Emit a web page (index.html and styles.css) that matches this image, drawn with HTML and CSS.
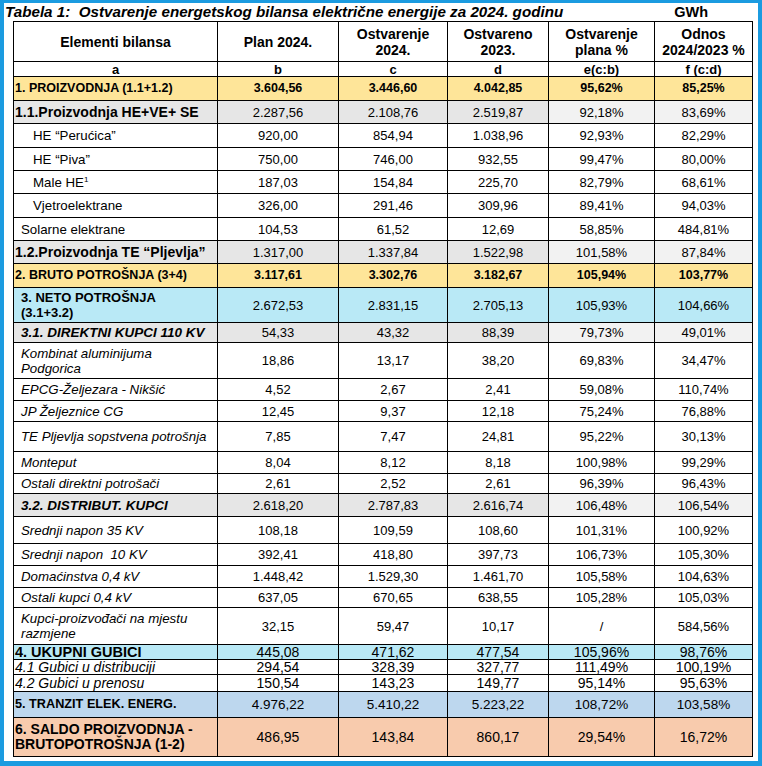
FILE: index.html
```html
<!DOCTYPE html>
<html>
<head>
<meta charset="utf-8">
<link rel="stylesheet" href="styles.css">
</head>
<body>
<div class="frame">
  <div class="title-row">
    <span class="title">Tabela 1:&nbsp; Ostvarenje energetskog bilansa električne energije za 2024. godinu</span>
    <span class="unit">GWh</span>
  </div>
  <table class="bilans">
    <colgroup>
      <col class="c-a"><col class="c-b"><col class="c-c"><col class="c-d"><col class="c-e"><col class="c-f">
    </colgroup>
    <thead>
      <tr class="h40 head">
        <th>Elementi bilansa</th><th>Plan 2024.</th><th>Ostvarenje<br>2024.</th><th>Ostvareno<br>2023.</th><th>Ostvarenje<br>plana %</th><th>Odnos<br>2024/2023 %</th>
      </tr>
      <tr class="h15 letters">
        <th>a</th><th>b</th><th>c</th><th>d</th><th>e(c:b)</th><th>f (c:d)</th>
      </tr>
    </thead>
    <tbody>
      <tr class="h24 yellow bold fs125"><td class="lbl flush">1. PROIZVODNJA (1.1+1.2)</td><td>3.604,56</td><td>3.446,60</td><td>4.042,85</td><td>95,62%</td><td>85,25%</td></tr>
      <tr class="h23 grey"><td class="lbl flush b fs14">1.1.Proizvodnja HE+VE+ SE</td><td>2.287,56</td><td>2.108,76</td><td>2.519,87</td><td class="lt">92,18%</td><td class="lt">83,69%</td></tr>
      <tr class="h24"><td class="lbl ind">HE “Perućica”</td><td>920,00</td><td>854,94</td><td>1.038,96</td><td>92,93%</td><td>82,29%</td></tr>
      <tr class="h23"><td class="lbl ind">HE “Piva”</td><td>750,00</td><td>746,00</td><td>932,55</td><td>99,47%</td><td>80,00%</td></tr>
      <tr class="h23"><td class="lbl ind">Male HE<sup>1</sup></td><td>187,03</td><td>154,84</td><td>225,70</td><td>82,79%</td><td>68,61%</td></tr>
      <tr class="h24"><td class="lbl ind">Vjetroelektrane</td><td>326,00</td><td>291,46</td><td>309,96</td><td>89,41%</td><td>94,03%</td></tr>
      <tr class="h23"><td class="lbl">Solarne elektrane</td><td>104,53</td><td>61,52</td><td>12,69</td><td>58,85%</td><td>484,81%</td></tr>
      <tr class="h23 grey"><td class="lbl flush b fs14">1.2.Proizvodnja TE “Pljevlja”</td><td>1.317,00</td><td>1.337,84</td><td>1.522,98</td><td class="lt">101,58%</td><td class="lt">87,84%</td></tr>
      <tr class="h24 yellow bold fs125"><td class="lbl flush">2. BRUTO POTROŠNJA (3+4)</td><td>3.117,61</td><td>3.302,76</td><td>3.182,67</td><td>105,94%</td><td>103,77%</td></tr>
      <tr class="h35 cyan"><td class="lbl b fs13 two">3. NETO POTROŠNJA<br>(3.1+3.2)</td><td>2.672,53</td><td>2.831,15</td><td>2.705,13</td><td>105,93%</td><td>104,66%</td></tr>
      <tr class="h20 grey"><td class="lbl b i fs135">3.1. DIREKTNI KUPCI 110 KV</td><td>54,33</td><td>43,32</td><td>88,39</td><td class="lt">79,73%</td><td class="lt">49,01%</td></tr>
      <tr class="h36"><td class="lbl i two">Kombinat aluminijuma<br>Podgorica</td><td>18,86</td><td>13,17</td><td>38,20</td><td>69,83%</td><td>34,47%</td></tr>
      <tr class="h22"><td class="lbl i">EPCG-Željezara - Nikšić</td><td>4,52</td><td>2,67</td><td>2,41</td><td>59,08%</td><td>110,74%</td></tr>
      <tr class="h21"><td class="lbl i">JP Željeznice CG</td><td>12,45</td><td>9,37</td><td>12,18</td><td>75,24%</td><td>76,88%</td></tr>
      <tr class="h30"><td class="lbl i">TE Pljevlja sopstvena potrošnja</td><td>7,85</td><td>7,47</td><td>24,81</td><td>95,22%</td><td>30,13%</td></tr>
      <tr class="h22"><td class="lbl i">Monteput</td><td>8,04</td><td>8,12</td><td>8,18</td><td>100,98%</td><td>99,29%</td></tr>
      <tr class="h20"><td class="lbl i">Ostali direktni potrošači</td><td>2,61</td><td>2,52</td><td>2,61</td><td>96,39%</td><td>96,43%</td></tr>
      <tr class="h23 grey"><td class="lbl b i fs135">3.2. DISTRIBUT. KUPCI</td><td>2.618,20</td><td>2.787,83</td><td>2.616,74</td><td class="lt">106,48%</td><td class="lt">106,54%</td></tr>
      <tr class="h27"><td class="lbl i">Srednji napon 35 KV</td><td>108,18</td><td>109,59</td><td>108,60</td><td>101,31%</td><td>100,92%</td></tr>
      <tr class="h22"><td class="lbl i">Srednji napon&nbsp; 10 KV</td><td>392,41</td><td>418,80</td><td>397,73</td><td>106,73%</td><td>105,30%</td></tr>
      <tr class="h22"><td class="lbl i">Domaćinstva 0,4 kV</td><td>1.448,42</td><td>1.529,30</td><td>1.461,70</td><td>105,58%</td><td>104,63%</td></tr>
      <tr class="h20"><td class="lbl i">Ostali kupci 0,4 kV</td><td>637,05</td><td>670,65</td><td>638,55</td><td>105,28%</td><td>105,03%</td></tr>
      <tr class="h37"><td class="lbl i two">Kupci-proizvođači na mjestu<br>razmjene</td><td>32,15</td><td>59,47</td><td>10,17</td><td>/</td><td>584,56%</td></tr>
      <tr class="h15 cyan fs14 snug"><td class="lbl flush b fs145">4. UKUPNI GUBICI</td><td>445,08</td><td>471,62</td><td>477,54</td><td>105,96%</td><td>98,76%</td></tr>
      <tr class="h15 fs14 snug"><td class="lbl flush i">4.1 Gubici u distribuciji</td><td>294,54</td><td>328,39</td><td>327,77</td><td>111,49%</td><td>100,19%</td></tr>
      <tr class="h17 fs14 snug"><td class="lbl flush i">4.2 Gubici u prenosu</td><td>150,54</td><td>143,23</td><td>149,77</td><td>95,14%</td><td>95,63%</td></tr>
      <tr class="h26 steel fs135"><td class="lbl flush b fs127">5. TRANZIT ELEK. ENERG.</td><td>4.976,22</td><td>5.410,22</td><td>5.223,22</td><td>108,72%</td><td>103,58%</td></tr>
      <tr class="h39 salmon fs14"><td class="lbl flush b two">6. SALDO PROIZVODNJA -<br>BRUTOPOTROŠNJA (1-2)</td><td>486,95</td><td>143,84</td><td>860,17</td><td>29,54%</td><td>16,72%</td></tr>
    </tbody>
  </table>
</div>
</body>
</html>
```

FILE: styles.css
```css
html, body {
  margin: 0;
  padding: 0;
  background: #ffffff;
}

.frame {
  box-sizing: border-box;
  width: 762px;
  height: 766px;
  border-style: solid;
  border-color: #1b9be0;
  border-width: 3px 4px 5px 4px;
  background: #ffffff;
  font-family: "Liberation Sans", Arial, sans-serif;
  color: #000;
}

.title-row {
  display: flex;
  justify-content: space-between;
  align-items: baseline;
  height: 18px;
  padding-left: 1px;
  padding-right: 50px;
}

.title {
  font-weight: bold;
  font-style: italic;
  font-size: 15.2px;
  line-height: 18px;
}

.unit {
  font-weight: bold;
  font-size: 14.5px;
  line-height: 18px;
}

.bilans {
  margin-left: 9px;
  width: 739px;
  border-collapse: collapse;
  table-layout: fixed;
  font-size: 13px;
}

.c-a { width: 204px; }
.c-b { width: 121px; }
.c-c { width: 109px; }
.c-d { width: 101px; }
.c-e { width: 106px; }
.c-f { width: 98px; }

.bilans th,
.bilans td {
  border: 1px solid #000;
  padding: 0 2px;
  text-align: center;
  vertical-align: middle;
  line-height: 15px;
  overflow: hidden;
  white-space: nowrap;
}

.bilans th {
  font-weight: bold;
}

.head th {
  font-size: 14px;
  line-height: 16px;
}

.letters th {
  font-size: 13px;
  line-height: 13px;
}

.bilans td.lbl {
  text-align: left;
  padding-left: 7px;
  font-size: 13.3px;
}

.bilans td.flush {
  padding-left: 1px;
}

.bilans td.ind {
  padding-left: 19px;
}

.b { font-weight: bold; }
.i { font-style: italic; }
.bold td { font-weight: bold; }

.bilans td.two {
  line-height: 15px;
}

.fs125 td, .bilans .fs125 td.lbl { font-size: 12.5px; }
.fs14 td, .bilans .fs14 td.lbl { font-size: 14px; }
.fs135 td { font-size: 13.5px; }
.bilans td.fs13 { font-size: 13px; }
.bilans td.fs135 { font-size: 13.5px; }
.bilans td.fs14 { font-size: 14px; }
.bilans td.fs127 { font-size: 12.7px; }
.bilans .fs14 td.fs145 { font-size: 14.5px; }

.bilans .snug td {
  line-height: 13px;
}

sup {
  font-size: 8px;
  line-height: 0;
  vertical-align: 5px;
}

.h15 { height: 15px; }
.h17 { height: 17px; }
.h20 { height: 20px; }
.h21 { height: 21px; }
.h22 { height: 22px; }
.h23 { height: 23px; }
.h24 { height: 24px; }
.h26 { height: 26px; }
.h27 { height: 27px; }
.h30 { height: 30px; }
.h35 { height: 35px; }
.h36 { height: 36px; }
.h37 { height: 37px; }
.h39 { height: 39px; }
.h40 { height: 40px; }

.yellow td { background: #fee599; }
.grey td { background: #e6e6e6; }
.grey td.lt { background: #f2f2f2; }
.cyan td { background: #b9e9f6; }
.steel td { background: #bdd7ee; }
.salmon td { background: #f8cbad; }
```
